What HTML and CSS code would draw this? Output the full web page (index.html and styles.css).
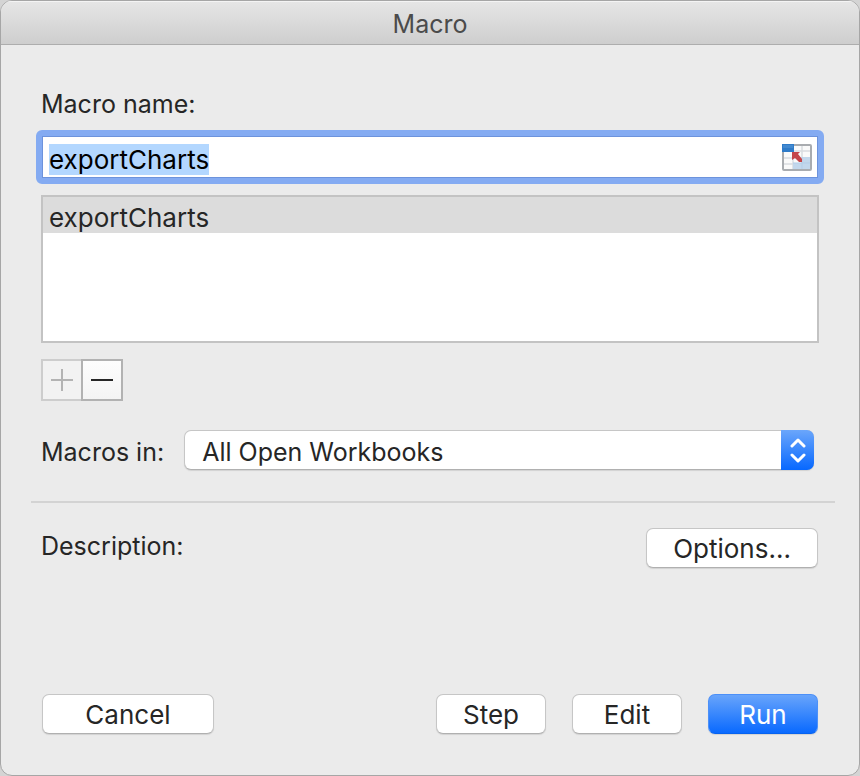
FILE: index.html
```html
<!DOCTYPE html>
<html lang="en">
<head>
<meta charset="utf-8">
<title>Macro</title>
<link rel="stylesheet" href="styles.css">
</head>
<body>
<form class="dialog" onsubmit="return false">
  <header class="titlebar"><h1 class="title">Macro</h1></header>
  <main class="content">
    <label class="label" for="macro-name">Macro name:</label>
    <div class="field">
      <input class="field-input" id="macro-name" type="text" value="exportCharts" spellcheck="false" autocomplete="off">
      <button class="picker" type="button" aria-label="Select range">
        <svg width="30" height="27" viewBox="0 0 30 27">
          <rect x="1" y="1" width="28" height="25" rx="1" fill="#fafafa" stroke="#a9acb0" stroke-width="2"/>
          <path d="M12 7H28M2 14H28M2 20H28M20 2V25M11 8V25" stroke="#d9dce0" stroke-width="1.5"/>
          <path d="M20 13H28V25H11V19H20Z" fill="#c2d7ec"/>
          <path d="M11 19H28M20 13V25" stroke="#b3cde7"/>
          <rect width="12" height="8" fill="#2f7bc8"/>
          <rect x="1" y="1" width="10" height="3" fill="#4289d0"/>
          <path d="M10 8H18L16 10L20 15V18H17L13 14L10 16Z" fill="#c44549"/>
        </svg>
      </button>
    </div>
    <ul class="list" aria-label="Macros">
      <li class="list-item">exportCharts</li>
    </ul>
    <div class="segments">
      <button class="segment segment-off" type="button" aria-label="Add" disabled>
        <svg width="22" height="22" viewBox="0 0 22 22"><path d="M0 11H22M11 0V22" stroke="currentColor" stroke-width="2"/></svg>
      </button>
      <button class="segment" type="button" aria-label="Remove">
        <svg width="22" height="22" viewBox="0 0 22 22"><path d="M0 11H22" stroke="currentColor" stroke-width="2"/></svg>
      </button>
    </div>
    <div class="source">
      <label class="label" for="source">Macros in:</label>
      <div class="popup">
        <select class="popup-select" id="source"><option>All Open Workbooks</option></select>
        <span class="popup-cap">
          <svg width="16" height="26" viewBox="0 0 16 26"><path d="M2 9L8 3L14 9M2 18L8 24L14 18" fill="none" stroke="#fff" stroke-width="3" stroke-linecap="round" stroke-linejoin="round"/></svg>
        </span>
      </div>
    </div>
    <hr class="divider">
    <div class="description">
      <span class="label">Description:</span>
      <button class="button button-wide" type="button">Options...</button>
    </div>
    <footer class="actions">
      <button class="button button-wide cancel" type="button">Cancel</button>
      <button class="button" type="button">Step</button>
      <button class="button" type="button">Edit</button>
      <button class="button button-primary" type="submit">Run</button>
    </footer>
  </main>
</form>
<script>
  const nameInput = document.getElementById("macro-name");
  nameInput.focus();
  nameInput.select();
</script>
</body>
</html>
```
FILE: styles.css
```css
* {
  box-sizing: border-box;
}

body {
  margin: 0;
  background: #d4d4d4;
  color: #262626;
  font: 25px/32px Inter, "Liberation Sans", sans-serif;
}

button, input, select {
  margin: 0;
  font: inherit;
  color: inherit;
}

.dialog {
  display: flex;
  flex-direction: column;
  min-height: 100vh;
  border: 1px solid #a6a6a6;
  border-radius: 12px;
  background: #ebebeb;
  overflow: hidden;
}

.titlebar {
  height: 44px;
  padding-top: 7px;
  border-bottom: 1px solid #adadad;
  background: linear-gradient(#e6e6e6, #cecece);
  box-shadow: inset 0 1px #f4f4f4;
}

.title {
  margin: 0;
  font: inherit;
  color: #4b4b4b;
  text-align: center;
}

.content {
  display: flex;
  flex-direction: column;
  flex: 1;
  padding: 43px 40px 41px;
}

.field {
  display: flex;
  align-items: center;
  height: 54px;
  margin: 10px -5px 0;
  padding: 0 6px 0 7px;
  border: 6px solid #84abf2;
  border-radius: 6px;
  background: #fff;
  box-shadow: inset 0 0 0 1px #6d93dc;
}

.field-input {
  flex: 1;
  min-width: 0;
  height: 40px;
  padding: 4px 0 0;
  border: 0;
  outline: 0;
  background: none;
  color: #000;
  font-size: 26px;
}

.field-input::selection {
  background: #b3d7ff;
  color: #000;
}

.picker {
  display: flex;
  padding: 0;
  border: 0;
  background: none;
}

.list {
  height: 148px;
  margin: 11px 0 0;
  padding: 0;
  border: 2px solid #c3c3c3;
  background: #fff;
  list-style: none;
  font-size: 26px;
}

.list-item {
  height: 36px;
  padding: 5px 6px 0;
  background: #dcdcdc;
}

.segments {
  display: flex;
  margin-top: 16px;
}

.segment {
  display: flex;
  align-items: center;
  justify-content: center;
  width: 42px;
  height: 42px;
  padding: 0;
  border: 2px solid #b2b2b2;
  background: linear-gradient(#fdfdfd, #f4f4f4);
}

.segment-off {
  width: 40px;
  border-color: #cdcdcd;
  border-right: 0;
  background: #f2f2f2;
  color: #b3b3b3;
}

.source {
  display: flex;
  align-items: center;
  gap: 20px;
  margin: 29px 5px 0 0;
}

.source .label {
  padding-top: 4px;
}

.popup {
  position: relative;
  flex: 1;
  display: flex;
}

.popup-select {
  flex: 1;
  height: 40px;
  padding: 3px 40px 0 17px;
  border: 1px solid #c6c6c6;
  border-bottom-color: #b0b0b0;
  border-radius: 7px;
  background: #fff;
  box-shadow: 0 1px 1px #d2d2d2;
  appearance: none;
  outline: 0;
}

.popup-cap {
  position: absolute;
  top: 0;
  right: 0;
  bottom: 0;
  display: flex;
  align-items: center;
  justify-content: center;
  width: 33px;
  border-radius: 0 7px 7px 0;
  background: linear-gradient(#6ba6fb, #0768ff);
  pointer-events: none;
}

.divider {
  height: 2px;
  margin: 31px -16px 0 -10px;
  border: 0;
  background: #d3d3d3;
}

.description {
  display: flex;
  justify-content: space-between;
  align-items: flex-start;
  margin: 25px 1px 0 0;
}

.description .label {
  padding-top: 2px;
}

.button {
  width: 110px;
  height: 40px;
  padding: 2px 0 0;
  border: 1px solid #c6c6c6;
  border-bottom-color: #b0b0b0;
  border-radius: 7px;
  background: #fff;
  box-shadow: 0 1px 1px #d2d2d2;
  font-size: 26px;
}

.button-wide {
  width: 172px;
}

.button-primary {
  border-color: #4c90f8;
  border-bottom-color: #0762ef;
  background: linear-gradient(#6ba6fb, #0768ff) border-box;
  color: #fff;
}

.actions {
  display: flex;
  gap: 26px;
  margin-top: auto;
  padding: 0 1px;
}

.cancel {
  margin-right: auto;
}
```
